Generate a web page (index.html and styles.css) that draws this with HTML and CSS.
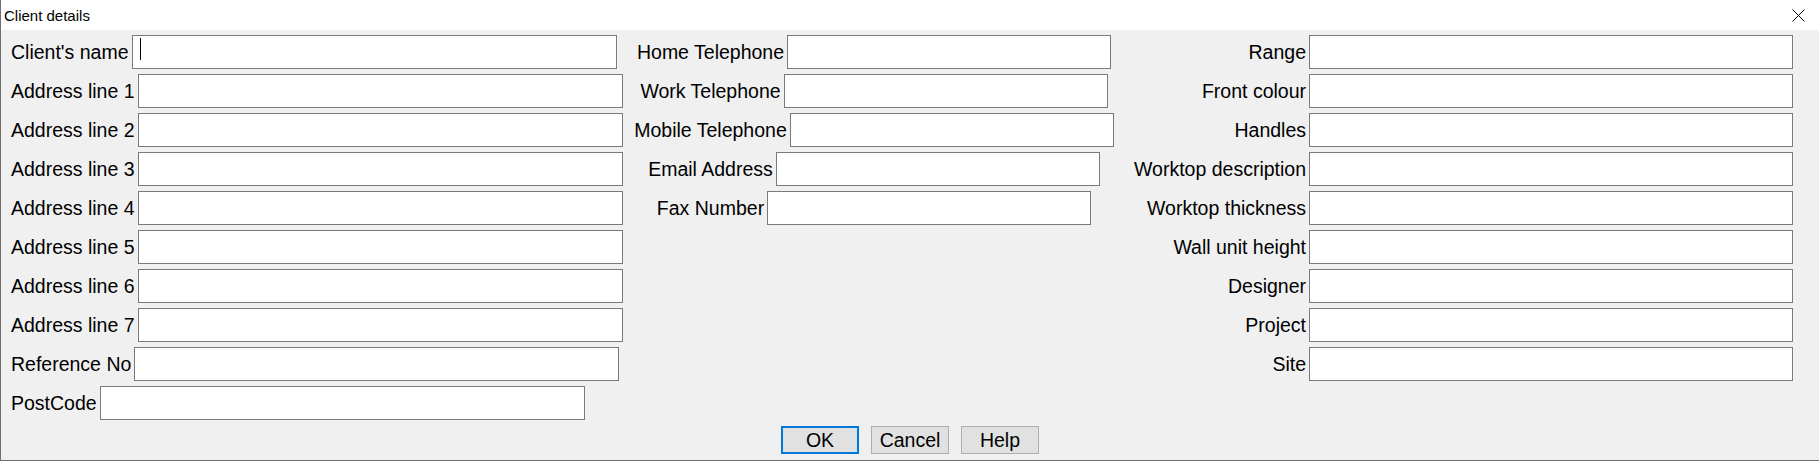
FILE: index.html
```html
<!DOCTYPE html>
<html lang="en">
<head>
    <meta charset="UTF-8">
    <meta name="viewport" content="width=device-width, initial-scale=1.0">
    <title>Client details</title>
    <link rel="stylesheet" href="styles.css">
</head>
<body>
    <div class="dialog">
        <div class="titlebar">
            <span class="title">Client details</span>
            <span class="close">
                <svg width="13" height="13" viewBox="0 0 13 13">
                    <path d="M0.5 0.5 L12.5 12.5 M12.5 0.5 L0.5 12.5" stroke="#000" stroke-width="1" fill="none"/>
                </svg>
            </span>
        </div>

        <form class="panel" id="clientForm">
            <div class="fields">
                <!-- coluna da esquerda: nome e endereço -->
                <div class="col col-left">
                    <div class="row">
                        <label for="nome">Client's name</label>
                        <span class="field-wrap">
                            <input type="text" id="nome" class="input wide">
                            <span class="caret"></span>
                        </span>
                    </div>
                    <div class="row"><label for="end1">Address line 1</label><input type="text" id="end1" class="input wide"></div>
                    <div class="row"><label for="end2">Address line 2</label><input type="text" id="end2" class="input wide"></div>
                    <div class="row"><label for="end3">Address line 3</label><input type="text" id="end3" class="input wide"></div>
                    <div class="row"><label for="end4">Address line 4</label><input type="text" id="end4" class="input wide"></div>
                    <div class="row"><label for="end5">Address line 5</label><input type="text" id="end5" class="input wide"></div>
                    <div class="row"><label for="end6">Address line 6</label><input type="text" id="end6" class="input wide"></div>
                    <div class="row"><label for="end7">Address line 7</label><input type="text" id="end7" class="input wide"></div>
                    <div class="row"><label for="ref">Reference No</label><input type="text" id="ref" class="input wide"></div>
                    <div class="row"><label for="cep">PostCode</label><input type="text" id="cep" class="input wide"></div>
                </div>

                <!-- coluna do meio: contatos -->
                <div class="col col-mid">
                    <div class="row"><label for="telCasa">Home Telephone</label><input type="tel" id="telCasa" class="input narrow"></div>
                    <div class="row"><label for="telTrab">Work Telephone</label><input type="tel" id="telTrab" class="input narrow"></div>
                    <div class="row"><label for="telCel">Mobile Telephone</label><input type="tel" id="telCel" class="input narrow"></div>
                    <div class="row"><label for="email">Email Address</label><input type="email" id="email" class="input narrow"></div>
                    <div class="row"><label for="fax">Fax Number</label><input type="tel" id="fax" class="input narrow"></div>
                </div>

                <!-- coluna da direita: detalhes da cozinha -->
                <div class="col col-right">
                    <label for="range">Range</label><input type="text" id="range" class="input wide">
                    <label for="frente">Front colour</label><input type="text" id="frente" class="input wide">
                    <label for="puxador">Handles</label><input type="text" id="puxador" class="input wide">
                    <label for="bancada">Worktop description</label><input type="text" id="bancada" class="input wide">
                    <label for="espessura">Worktop thickness</label><input type="text" id="espessura" class="input wide">
                    <label for="altura">Wall unit height</label><input type="text" id="altura" class="input wide">
                    <label for="designer">Designer</label><input type="text" id="designer" class="input wide">
                    <label for="projeto">Project</label><input type="text" id="projeto" class="input wide">
                    <label for="local">Site</label><input type="text" id="local" class="input wide">
                </div>
            </div>

            <div class="buttons">
                <button type="submit" class="btn btn-default">OK</button>
                <button type="button" class="btn">Cancel</button>
                <button type="button" class="btn">Help</button>
            </div>
        </form>
    </div>
</body>
</html>
```

FILE: styles.css
```css
:root {
    --fundo: #f0f0f0;
    --borda-janela: #6f6f6f;
    --borda-input: #7a7a7a;
    --botao: #e1e1e1;
    --borda-botao: #adadad;
    --azul-foco: #0078d7;
    --texto: #000;
}

* {
    box-sizing: border-box;
}

body {
    margin: 0;
    font-family: 'Liberation Sans', Arial, sans-serif;
    color: var(--texto);
    background-color: var(--fundo);
}

.dialog {
    width: 1819px;
    height: 461px;
    border-left: 1px solid var(--borda-janela);
    border-bottom: 1px solid var(--borda-janela);
    display: flex;
    flex-direction: column;
}

/* barra de título */
.titlebar {
    height: 30px;
    background-color: #fff;
    display: flex;
    align-items: center;
    justify-content: space-between;
    padding: 0 14px 0 3px;
}

.title {
    font-size: 15px;
}

.close {
    display: flex;
}

.panel {
    flex: 1;
    margin: 0;
    background-color: var(--fundo);
    padding-top: 5px;
}

.fields {
    display: grid;
    grid-template-columns: 614px 498px 670px;
    padding: 0 26px 0 10px;
    font-size: 19.5px;
}

.col {
    display: flex;
    flex-direction: column;
    gap: 5px;
}

.col-mid {
    align-items: center;
}

.col-right {
    display: grid;
    grid-template-columns: auto 484px;
    justify-content: end;
    align-items: center;
    column-gap: 3px;
    row-gap: 5px;
    align-content: start;
}

.col-right label {
    justify-self: end;
}

.row {
    display: flex;
    align-items: center;
    gap: 3px;
    height: 34px;
}

label {
    white-space: nowrap;
}

.input {
    height: 34px;
    border: 1px solid var(--borda-input);
    background-color: #fff;
    margin: 0;
    padding: 0 6px;
    font: inherit;
    outline: none;
    border-radius: 0;
}

.input.wide {
    width: 485px;
}

.col-right .input.wide {
    width: 484px;
}

.input.narrow {
    width: 324px;
}

.field-wrap {
    position: relative;
    display: flex;
}

.caret {
    position: absolute;
    left: 8px;
    top: 3px;
    width: 1px;
    height: 22px;
    background-color: #000;
}

/* botões */
.buttons {
    display: flex;
    justify-content: center;
    gap: 12px;
    margin-top: 6px;
}

.btn {
    width: 78px;
    height: 28px;
    padding: 0;
    background-color: var(--botao);
    border: 1px solid var(--borda-botao);
    border-radius: 0;
    font-family: inherit;
    font-size: 19.5px;
    color: var(--texto);
}

.btn-default {
    border: 2px solid var(--azul-foco);
}
```
